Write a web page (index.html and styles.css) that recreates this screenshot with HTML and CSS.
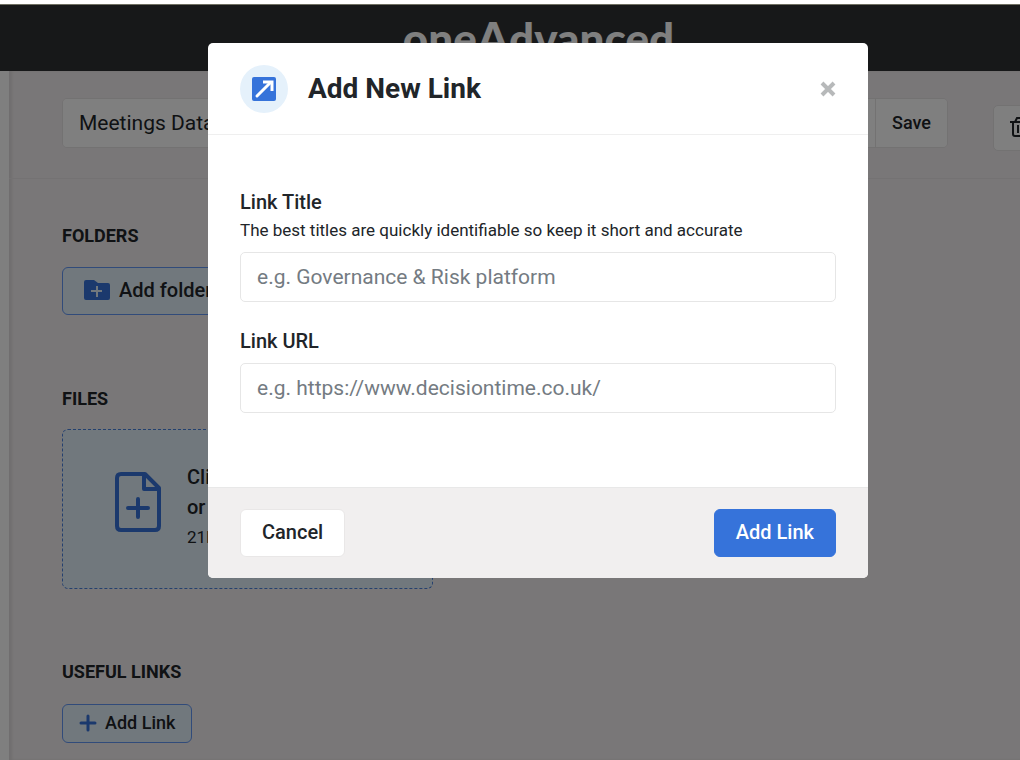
FILE: index.html
```html
<!DOCTYPE html>
<html lang="en">
<head>
  <meta charset="UTF-8">
  <meta name="viewport" content="width=device-width, initial-scale=1">
  <title>Add New Link</title>
  <link rel="stylesheet" href="styles.css">
</head>
<body>

<div class="app">
  <header class="topbar">
    <a href="#" class="logo">one<span class="logo-a">A</span>dvanced</a>
  </header>

  <div class="layout">
    <div class="sidebar-edge"></div>

    <main class="main">
      <div class="toolbar">
        <form class="name-form">
          <input type="text" class="name-input" aria-label="Name" value="Meetings Data">
          <button type="button" class="save-btn">Save</button>
        </form>
        <button type="button" class="delete-btn" aria-label="Delete">
          <svg width="20" height="20" viewBox="0 0 20 20" fill="none" stroke="currentColor" stroke-width="2">
            <path d="M0 5h20M5 5l2-4h6l2 4M3 5v12q0 2 2 2h10q2 0 2-2V5M8 8v8M12 8v8"/>
          </svg>
        </button>
      </div>

      <section class="section folders">
        <h2>FOLDERS</h2>
        <button type="button" class="tint-btn folder-btn">
          <svg class="folder-icon" width="28" height="22" viewBox="0 0 28 22">
            <path fill="currentColor" d="M3 1h8l4 3h10q2 0 2 2v13q0 2-2 2H3q-2 0-2-2V3q0-2 2-2z"/>
            <path class="folder-plus" d="M14 7v11M8 12h11"/>
          </svg>
          Add folder
        </button>
      </section>

      <section class="section files">
        <h2>FILES</h2>
        <button type="button" class="dropzone">
          <svg class="file-icon" width="46" height="60" viewBox="0 0 46 60" fill="none" stroke="currentColor" stroke-width="4" stroke-linejoin="round">
            <path d="M6 2h24l14 14v38q0 4-4 4H6q-4 0-4-4V6q0-4 4-4z"/>
            <path d="M29 3v14h14"/>
            <path stroke-linecap="round" d="M23 27v18M13 36h20"/>
          </svg>
          <span class="dropzone-text">
            <strong>Click</strong>
            <strong>or drop</strong>
            <small>21MB</small>
          </span>
        </button>
      </section>

      <section class="section links">
        <h2>USEFUL LINKS</h2>
        <button type="button" class="tint-btn link-btn">
          <svg width="18" height="18" viewBox="0 0 18 18" fill="none" stroke="currentColor" stroke-width="3" stroke-linecap="round">
            <path d="M9 2v14M2 9h14"/>
          </svg>
          <span>Add Link</span>
        </button>
      </section>
    </main>
  </div>

  <div class="backdrop">
    <form class="modal" role="dialog" aria-labelledby="modal-title">
      <div class="modal-header">
        <span class="modal-icon">
          <svg width="26" height="26" viewBox="0 0 26 26">
            <rect x="1" y="1" width="24" height="24" rx="2" fill="#3673da"/>
            <path d="M6 20L19 7" fill="none" stroke="#fff" stroke-width="3" stroke-linecap="round"/>
            <path d="M12 6h9v9" fill="none" stroke="#fff" stroke-width="3"/>
          </svg>
        </span>
        <h1 id="modal-title">Add New Link</h1>
        <button type="button" class="close-btn" aria-label="Close">
          <svg width="16" height="16" viewBox="0 0 16 16" stroke="currentColor" stroke-width="4">
            <path d="M2 2l12 12M14 2L2 14"/>
          </svg>
        </button>
      </div>

      <div class="modal-body">
        <div class="field">
          <label for="link-title">Link Title</label>
          <p class="hint">The best titles are quickly identifiable so keep it short and accurate</p>
          <input type="text" id="link-title" placeholder="e.g. Governance &amp; Risk platform">
        </div>
        <div class="field">
          <label for="link-url">Link URL</label>
          <input type="text" id="link-url" placeholder="e.g. https://www.decisiontime.co.uk/">
        </div>
      </div>

      <div class="modal-footer">
        <button type="button" class="btn">Cancel</button>
        <button type="submit" class="btn btn-primary">Add Link</button>
      </div>
    </form>
  </div>
</div>

</body>
</html>
```
FILE: styles.css
```css
* {
  box-sizing: border-box;
}

body {
  margin: 0;
  padding-top: 4px;
  background: #fff;
  color: #212529;
  font-family: Roboto, sans-serif;
  font-size: 20px;
}

button, input {
  font: inherit;
  color: inherit;
}

button {
  cursor: pointer;
  font-weight: 500;
}

h1, h2, p {
  margin: 0;
}

.app {
  position: relative;
  display: flex;
  flex-direction: column;
  min-height: calc(100vh - 4px);
  overflow: hidden;
  border-top: 1px solid #6f6f62;
}

.topbar {
  display: flex;
  justify-content: center;
  height: 66px;
  padding: 8px 0 0 57px;
  background: #2e3033;
}

.logo {
  color: #fff;
  font-family: Lato, sans-serif;
  font-size: 44px;
  font-weight: 900;
  line-height: 50px;
  text-decoration: none;
}

.logo-a {
  font-size: 46px;
}

.layout {
  display: flex;
  flex: 1;
}

.sidebar-edge {
  flex: none;
  width: 9px;
  background: #fff;
}

.main {
  flex: 1;
  min-width: 0;
  background: #f3eff0;
  box-shadow: inset 3px 0 3px rgba(0, 0, 0, 0.08);
}

.toolbar {
  display: flex;
  justify-content: space-between;
  height: 108px;
  padding: 27px 0 0 53px;
  border-bottom: 1px solid #e8e5e6;
}

.name-form {
  display: flex;
  flex: 1;
  height: 50px;
  margin-right: 45px;
  border: 1px solid #e6e4e5;
  border-radius: 5px;
  overflow: hidden;
}

.name-input {
  flex: 1;
  min-width: 0;
  padding: 0 16px;
  border: 0;
  background: #fff;
  font-size: 21px;
}

.save-btn {
  width: 72px;
  padding: 0 0 2px;
  border: 0;
  border-left: 1px solid #e6e4e5;
  background: #fff;
  font-size: 18px;
}

.delete-btn {
  flex: none;
  width: 52px;
  height: 46px;
  margin: 7px -25px 0 0;
  padding: 0 0 2px 16px;
  border: 1px solid #e6e4e5;
  border-radius: 5px;
  background: #fff;
  text-align: left;
}

.delete-btn svg {
  display: block;
}

.section {
  padding-left: 53px;
}

.section h2 {
  font-size: 18px;
  font-weight: 700;
  line-height: 24px;
}

.folders {
  padding-top: 45px;
}

.files {
  padding-top: 72px;
}

.links {
  padding-top: 71px;
}

.tint-btn {
  display: flex;
  align-items: center;
  border: 1px solid #6296f5;
  border-radius: 6px;
  background: #e3f0fa;
}

.tint-btn svg {
  color: #3673da;
}

.folder-btn {
  gap: 8px;
  width: 180px;
  height: 48px;
  margin-top: 19px;
  padding: 0 20px 2px;
}

.folder-plus {
  fill: none;
  stroke: #e3f0fa;
  stroke-width: 2;
}

.link-btn {
  gap: 8px;
  height: 39px;
  margin-top: 20px;
  padding: 0 16px 2px;
  font-size: 18px;
}

.dropzone {
  display: flex;
  align-items: center;
  gap: 26px;
  width: 371px;
  height: 160px;
  margin-top: 18px;
  padding: 0 52px 4px;
  border: 1px dashed #4a80dd;
  border-radius: 6px;
  background: #e3f0fa;
  text-align: left;
}

.file-icon {
  flex: none;
  margin-bottom: 10px;
  color: #3673da;
}

.dropzone-text {
  display: flex;
  flex-direction: column;
  line-height: 30px;
}

.dropzone-text strong {
  font-weight: 500;
}

.dropzone-text small {
  font-size: 17px;
  font-weight: 400;
}

.backdrop {
  position: absolute;
  inset: 0;
  padding: 38px 16px 38px 72px;
  background: rgba(0, 0, 0, 0.5);
}

.modal {
  width: 100%;
  max-width: 660px;
  margin: 0 auto;
  overflow: hidden;
  border-radius: 5px;
  background: #fff;
}

.modal-header {
  display: flex;
  align-items: center;
  height: 92px;
  padding: 0 32px;
  border-bottom: 1px solid #efefef;
}

.modal-icon {
  display: flex;
  align-items: center;
  justify-content: center;
  width: 48px;
  height: 48px;
  border-radius: 50%;
  background: #e5f1fb;
}

.modal-header h1 {
  flex: 1;
  padding-left: 20px;
  font-size: 28px;
  font-weight: 700;
}

.close-btn {
  padding: 0;
  border: 0;
  background: none;
  color: #b7b9ba;
}

.close-btn svg {
  display: block;
}

.modal-body {
  padding: 53px 32px 74px;
}

.field + .field {
  margin-top: 25px;
}

.field label {
  display: block;
  font-weight: 500;
  line-height: 28px;
}

.hint {
  font-size: 17px;
  line-height: 28px;
}

.field input {
  display: block;
  width: 100%;
  height: 50px;
  margin-top: 8px;
  padding: 0 16px;
  border: 1px solid #e6e6e6;
  border-radius: 5px;
  background: #fff;
  font-size: 21px;
}

.field input::placeholder {
  color: #747b82;
  opacity: 1;
}

.modal-footer {
  display: flex;
  justify-content: space-between;
  padding: 21px 32px;
  border-top: 1px solid #e8e8e8;
  background: #f1efef;
}

.btn {
  height: 48px;
  padding: 0 21px 2px;
  border: 1px solid #e9e7e7;
  border-radius: 6px;
  background: #fff;
}

.btn-primary {
  border-color: #3673da;
  background: #3673da;
  color: #fff;
}
```
